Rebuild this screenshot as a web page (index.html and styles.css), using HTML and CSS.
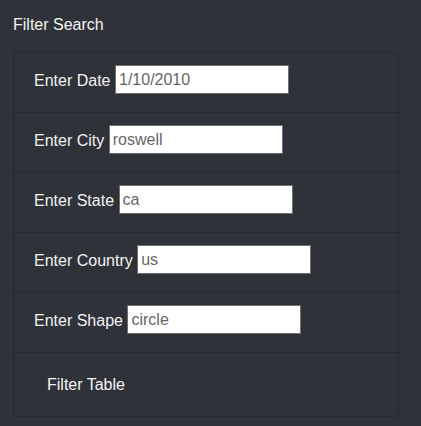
FILE: index.html
```html
<!DOCTYPE html>
<html lang="en">
<head>
<meta charset="utf-8">
<title>Filter Search</title>
<link rel="stylesheet" href="styles.css">
</head>
<body>
<div class="panel">
  <h5 class="panel-title">Filter Search</h5>
  <ul class="list">
    <li class="list-item">
      <label class="field-label" for="date">Enter Date</label>
      <input class="field-input" id="date" type="text" value="1/10/2010">
    </li>
    <li class="list-item">
      <label class="field-label" for="city">Enter City</label>
      <input class="field-input" id="city" type="text" value="roswell">
    </li>
    <li class="list-item">
      <label class="field-label" for="state">Enter State</label>
      <input class="field-input" id="state" type="text" value="ca">
    </li>
    <li class="list-item">
      <label class="field-label" for="country">Enter Country</label>
      <input class="field-input" id="country" type="text" value="us">
    </li>
    <li class="list-item">
      <label class="field-label" for="shape">Enter Shape</label>
      <input class="field-input" id="shape" type="text" value="circle">
    </li>
    <li class="list-item list-item-last">
      <button class="filter-btn" type="button">Filter Table</button>
    </li>
  </ul>
</div>
</body>
</html>
```
FILE: styles.css
```css
html, body {
  margin: 0;
  padding: 0;
  background: #30323a;
  font-family: "Liberation Sans", Arial, sans-serif;
  color: #f2f2f2;
}

.panel {
  padding: 15px 22px 0 13px;
}

.panel-title {
  margin: 0;
  font-size: 16px;
  font-weight: 400;
  line-height: 20px;
  color: #f4f4f4;
}

.list {
  list-style: none;
  margin: 17px 0 0 0;
  padding: 0;
  border: 1px solid #26282e;
  border-radius: 4px;
  background: #30323a;
}

.list-item {
  display: flex;
  align-items: center;
  gap: 4.5px;
  padding: 12px 20px 18px 20px;
  border-bottom: 1px solid #26282e;
}

.list-item-last {
  border-bottom: none;
  padding: 12px 20px 13px 20px;
}

.field-label {
  font-size: 16px;
  line-height: 20px;
  padding-top: 2px;
  color: #f2f2f2;
}

.field-input {
  box-sizing: border-box;
  width: 174px;
  height: 29px;
  margin: 0;
  padding: 1px 3px 0 3px;
  border: 1px solid #6e6e6e;
  border-radius: 0;
  background: #ffffff;
  font-family: "Liberation Sans", Arial, sans-serif;
  font-size: 16px;
  color: #666666;
  outline: none;
}

.filter-btn {
  box-sizing: border-box;
  height: 38px;
  margin: 0;
  padding: 7px 12px 5px 12px;
  border: 1px solid transparent;
  background: transparent;
  font-family: "Liberation Sans", Arial, sans-serif;
  font-size: 16px;
  line-height: 24px;
  color: #f4f4f4;
  cursor: pointer;
}
```
